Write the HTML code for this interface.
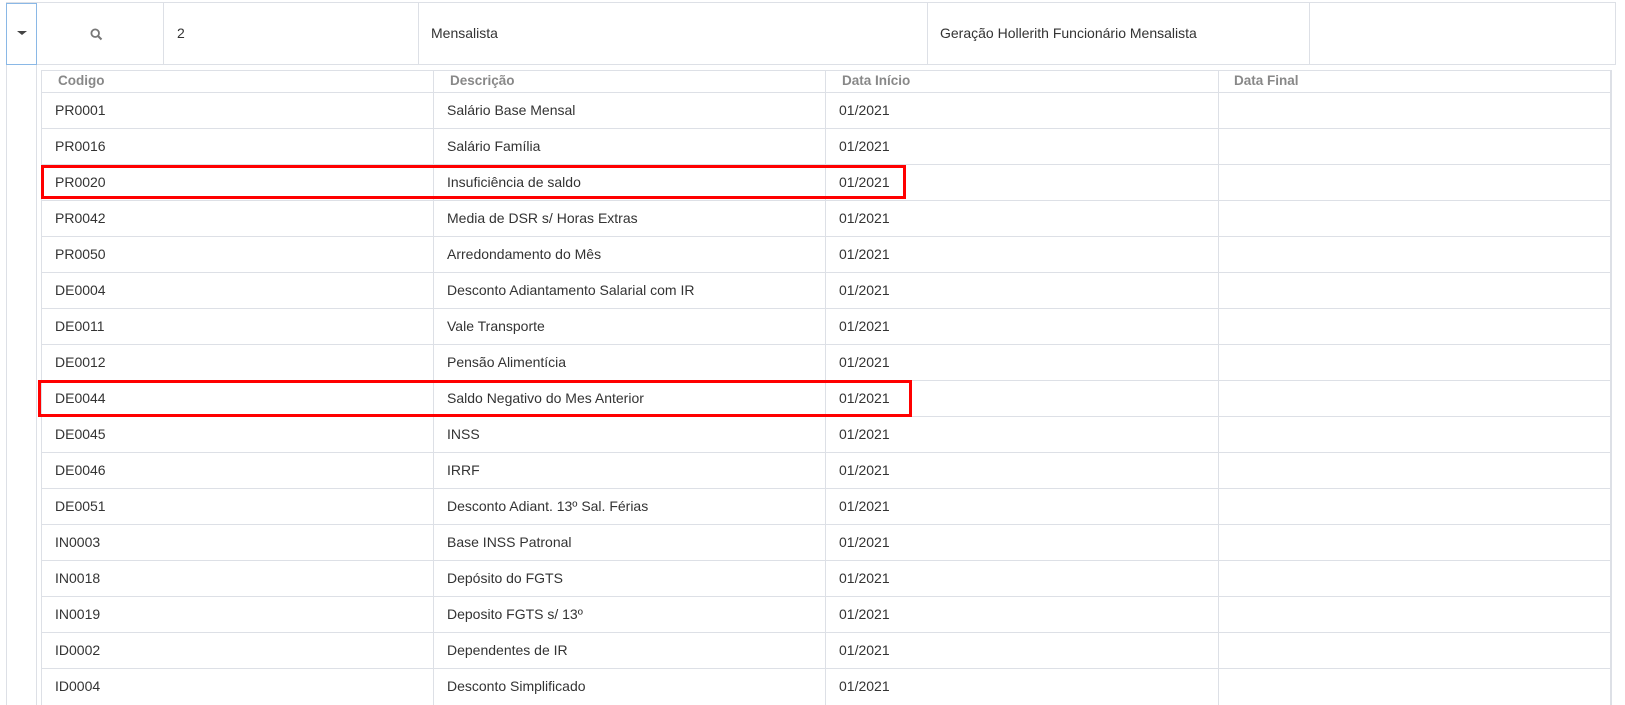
<!DOCTYPE html>
<html><head><meta charset="utf-8"><style>
*{box-sizing:border-box;margin:0;padding:0}
body{width:1625px;height:705px;background:#fff;font-family:"Liberation Sans",sans-serif;font-size:14px;color:#333;position:relative;overflow:hidden}
.a{position:absolute}
.vl{position:absolute;width:1px;background:#dde0e6}
.hl{position:absolute;height:1px;background:#dde0e6}
.t{position:absolute;white-space:nowrap}
.h{color:#888;font-weight:bold;font-size:13.5px}
</style></head><body>
<div class="hl" style="left:6px;top:2px;width:1610px"></div>
<div class="hl" style="left:6px;top:64px;width:1610px"></div>
<div class="vl" style="left:6px;top:2px;height:703px"></div>
<div class="vl" style="left:1615px;top:2px;height:63px"></div>
<div class="vl" style="left:163px;top:2px;height:63px"></div>
<div class="vl" style="left:418px;top:2px;height:63px"></div>
<div class="vl" style="left:927px;top:2px;height:63px"></div>
<div class="vl" style="left:1309px;top:2px;height:63px"></div>
<div class="vl" style="left:36px;top:65px;height:640px"></div>
<div class="a" style="left:6px;top:3px;width:31px;height:62px;border:1px solid #8ab8e6"></div>
<div class="a" style="left:17px;top:31px;width:0;height:0;border-left:5px solid transparent;border-right:5px solid transparent;border-top:4px solid #444"></div>
<svg class="a" style="left:90px;top:28px" width="13" height="13" viewBox="0 0 13 13"><circle cx="5.2" cy="5.2" r="3.8" fill="none" stroke="#777" stroke-width="1.8"/><path d="M8 8l3.5 3.5" stroke="#777" stroke-width="2"/></svg>
<div class="t" style="left:177px;top:25px">2</div>
<div class="t" style="left:431px;top:25px">Mensalista</div>
<div class="t" style="left:940px;top:25px">Geração Hollerith Funcionário Mensalista</div>

<div class="a" style="left:41px;top:70px;width:1571px;height:635px;border:1px solid #dde0e6;border-right:2px solid #dde0e6;border-bottom:none"></div>
<div class="vl" style="left:433px;top:70px;height:635px"></div>
<div class="vl" style="left:825px;top:70px;height:635px"></div>
<div class="vl" style="left:1218px;top:70px;height:635px"></div>
<div class="t h" style="left:58px;top:73px">Codigo</div>
<div class="t h" style="left:450px;top:73px">Descrição</div>
<div class="t h" style="left:842px;top:73px">Data Início</div>
<div class="t h" style="left:1234px;top:73px">Data Final</div>
<div id="rows"></div>
<div class="a" style="left:41px;top:165px;width:865px;height:34px;border:3px solid #f00"></div>
<div class="a" style="left:38px;top:380px;width:874px;height:37px;border:3px solid #f00"></div>
<script>
var d=[["PR0001","Salário Base Mensal"],["PR0016","Salário Família"],["PR0020","Insuficiência de saldo"],["PR0042","Media de DSR s/ Horas Extras"],["PR0050","Arredondamento do Mês"],["DE0004","Desconto Adiantamento Salarial com IR"],["DE0011","Vale Transporte"],["DE0012","Pensão Alimentícia"],["DE0044","Saldo Negativo do Mes Anterior"],["DE0045","INSS"],["DE0046","IRRF"],["DE0051","Desconto Adiant. 13º Sal. Férias"],["IN0003","Base INSS Patronal"],["IN0018","Depósito do FGTS"],["IN0019","Deposito FGTS s/ 13º"],["ID0002","Dependentes de IR"],["ID0004","Desconto Simplificado"]];
var h="";
for(var i=0;i<d.length;i++){var y=92+i*36;
h+='<div class="hl" style="left:41px;top:'+y+'px;width:1571px"></div>';
h+='<div class="t" style="left:55px;top:'+(y+10)+'px">'+d[i][0]+'</div>';
h+='<div class="t" style="left:447px;top:'+(y+10)+'px">'+d[i][1]+'</div>';
h+='<div class="t" style="left:839px;top:'+(y+10)+'px">01/2021</div>';}
document.getElementById("rows").innerHTML=h;
</script>
</body></html>
